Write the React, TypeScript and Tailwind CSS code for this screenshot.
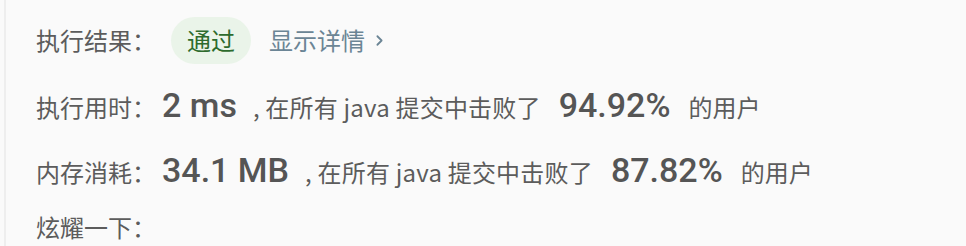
import { ChevronRight } from 'lucide-react';

const cjk = '"Noto Sans CJK SC", "Noto Sans", sans-serif';
const num = 'Roboto, "Noto Sans", sans-serif';

function StatRow({ label, value, percent }: { label: string; value: string; percent: string }) {
  return (
    <div className="flex items-baseline text-[24px] text-[#5c5c5c]">
      <span>{label}</span>
      <span className="ml-[6px] mr-[16px] text-[34px] font-medium text-[#555]" style={{ fontFamily: num }}>
        {value}
      </span>
      <span className="tracking-[0.2px]">, 在所有 java 提交中击败了</span>
      <span className="ml-[18px] mr-[18px] text-[34px] font-medium text-[#555]" style={{ fontFamily: num }}>
        {percent}
      </span>
      <span>的用户</span>
    </div>
  );
}

export default function App() {
  return (
    <div className="h-[246px] w-[966px] overflow-hidden bg-[#fafafa]" style={{ fontFamily: cjk }}>
      <div className="ml-[4px] h-full border-l-2 border-[#eeeeee] pl-[30px] pt-[16px]">
        {/* result */}
        <div className="flex h-[48px] items-center text-[24px] text-[#5c5c5c]">
          <span>执行结果：</span>
          <span className="ml-[15px] flex h-[47px] items-center rounded-full bg-[#eaf4e9] px-[16px] text-[#2e6b2d]">
            通过
          </span>
          <span className="ml-[18px] flex items-center text-[#6b8595]">
            显示详情
            <ChevronRight className="ml-[6px] h-[17px] w-[17px]" strokeWidth={2.5} />
          </span>
        </div>

        <div className="mt-[16px]">
          <StatRow label="执行用时：" value="2 ms" percent="94.92%" />
        </div>
        <div className="mt-[14px]">
          <StatRow label="内存消耗：" value="34.1 MB" percent="87.82%" />
        </div>

        <div className="mt-[14px] text-[24px] leading-[34px] text-[#5c5c5c]">炫耀一下：</div>
      </div>
    </div>
  );
}
